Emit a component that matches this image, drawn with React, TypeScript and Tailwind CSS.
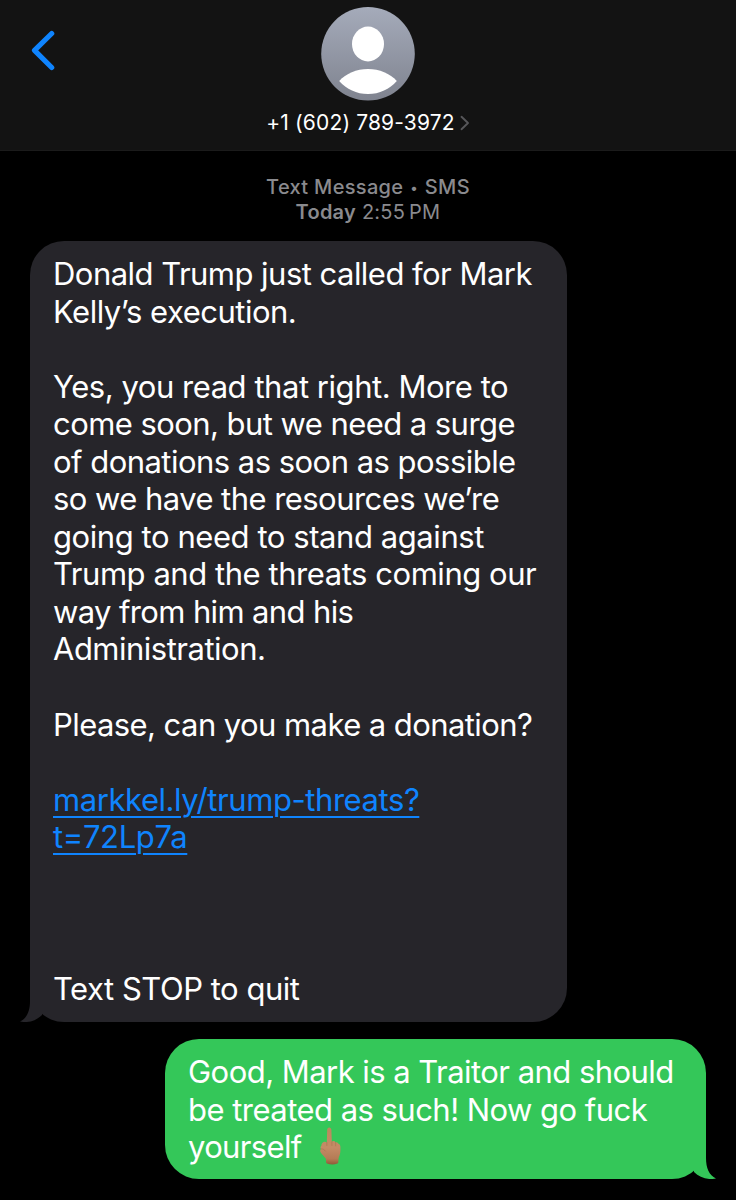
import React from "react";

type Line = { text: string; track: string };

const incoming: Line[] = [
  { text: "Donald Trump just called for Mark", track: "tracking-[-0.53px]" },
  { text: "Kelly’s execution.", track: "tracking-[-0.5px]" },
  { text: "", track: "" },
  { text: "Yes, you read that right. More to", track: "tracking-[-0.46px]" },
  { text: "come soon, but we need a surge", track: "tracking-[-0.56px]" },
  { text: "of donations as soon as possible", track: "tracking-[-0.53px]" },
  { text: "so we have the resources we’re", track: "tracking-[-0.55px]" },
  { text: "going to need to stand against", track: "tracking-[-0.43px]" },
  { text: "Trump and the threats coming our", track: "tracking-[-0.45px]" },
  { text: "way from him and his", track: "tracking-[-0.63px]" },
  { text: "Administration.", track: "tracking-[-0.5px]" },
  { text: "", track: "" },
  { text: "Please, can you make a donation?", track: "tracking-[-0.57px]" },
  { text: "", track: "" },
];

const link: Line[] = [
  { text: "markkel.ly/trump-threats?", track: "tracking-[-0.43px]" },
  { text: "t=72Lp7a", track: "tracking-[-0.36px]" },
];

const outgoing: Line[] = [
  { text: "Good, Mark is a Traitor and should", track: "tracking-[-0.54px]" },
  { text: "be treated as such! Now go fuck", track: "tracking-[-0.53px]" },
];

function TextLine({ text, track }: Line) {
  return <div className={`h-[37.56px] whitespace-pre ${track}`}>{text}</div>;
}

function MiddleFinger() {
  return (
    <svg className="ml-[18px] mt-[-1px] h-[38px] w-[21px] shrink-0" viewBox="0 0 21 38" role="img" aria-label="🖕🏽">
      <defs>
        <linearGradient id="skin" x1="0" y1="0" x2="0" y2="1">
          <stop offset="0" stopColor="#b98a5c" />
          <stop offset="0.55" stopColor="#c48b66" />
          <stop offset="0.85" stopColor="#b57b55" />
          <stop offset="1" stopColor="#8f5a38" />
        </linearGradient>
      </defs>
      <path
        d="M7.200 3C7.200 1.300 8 .4 9.200.4s2.100.9 2.200 2.600l.4 11.700c.9-1 2.900-.9 3.700.5 1.400-.2 2.600.4 3 1.600 1.200.4 1.800 1.500 1.900 3 .1 3 .1 6-.7 8.200-.4 1.400-1 2.300-1.200 3.600l-.2 4c-.1 1.100-2.200 1.800-6 1.800-4 0-6.100-.6-6.200-1.800l-.2-3.900C4.600 29.500 1.900 27.500.6 25.200c-.6-1.200-.5-2.500.4-3.300-.8-1-.6-2.300.3-3 .2-2 .9-3.600 2.500-4 1.200-.3 2.300-.1 3 .5z"
        fill="url(#skin)"
      />
      <path
        d="M6.800 15.600v3M11.900 15v3.500M15.600 15.500v3.300M1.200 21.900c1.600-.1 3.300.6 4.300 2.200"
        fill="none"
        stroke="#945d3b"
        strokeOpacity="0.45"
        strokeWidth="0.7"
        strokeLinecap="round"
      />
    </svg>
  );
}

export default function App() {
  return (
    <div className="flex h-[1200px] w-[736px] flex-col overflow-hidden bg-black font-['Inter',sans-serif] text-white">
      <header className="grid h-[151px] shrink-0 grid-cols-[1fr_auto_1fr] border-b border-[#1b1b1b] bg-[#131313]">
        <button aria-label="Back" className="ml-[31px] mt-[30px] h-[41px] w-[25px] self-start">
          <svg viewBox="0 0 25 41" className="h-[41px] w-[25px]">
            <path d="M20.700 3.500L3.500 20.300L20.700 37.500" fill="none" stroke="#0f84fe" strokeWidth="5.200" strokeLinecap="round" strokeLinejoin="round" />
          </svg>
        </button>
        <div className="flex flex-col items-center pt-[7px]">
          <svg viewBox="0 0 94 94" className="h-[94px] w-[94px]">
            <defs>
              <linearGradient id="avatar" x1="0" y1="0" x2="0" y2="1">
                <stop offset="0" stopColor="#a5abba" />
                <stop offset="1" stopColor="#7f838f" />
              </linearGradient>
            </defs>
            <circle cx="47" cy="46.800" r="46.800" fill="url(#avatar)" />
            <ellipse cx="47" cy="37" rx="16" ry="17.400" fill="#fff" />
            <path d="M18.200 74C25 66.500 35.500 62 47 62s22 4.500 28.800 12C68.500 82.300 58.500 87 47 87s-21.500-4.700-28.800-13z" fill="#fff" />
          </svg>
          <div className="mt-[8px] flex items-center text-[21px] leading-[27px]">
            <span className="font-[370] tracking-[0.15px]">+1 (602) 789-3972</span>
            <svg viewBox="0 0 10 16" className="ml-[5px] mt-[1px] h-[16px] w-[10px]">
              <path d="M1.500 1.800L8 8L1.500 14.200" fill="none" stroke="#57575a" strokeWidth="1.900" strokeLinecap="round" strokeLinejoin="round" />
            </svg>
          </div>
        </div>
      </header>

      <main className="flex flex-col">
        <div className="mt-[24px] flex h-[66px] flex-col items-center text-[20px] leading-[24.500px] text-[#8a8a8e]">
          <div className="h-[24.500px] whitespace-pre font-medium tracking-[0.32px]">Text Message <span className="relative top-[-1.500px] mx-[1.200px] text-[14px]">•</span> SMS</div>
          <div className="h-[24.500px] tracking-[0.25px]"><span className="font-semibold">Today</span> 2:55{"\u202F"}PM</div>
        </div>

        <section className="relative ml-[30px] h-[781px] w-[537px] rounded-[34px] bg-[#26252a] pl-[23px] pt-[14px] font-[370] text-[31px] leading-[37.560px]">
          {incoming.map((l, i) => <TextLine key={i} {...l} />)}
          <a className="block text-[#0f84fe] underline decoration-[2px] underline-offset-[5px]">
            {link.map((l, i) => <TextLine key={i} {...l} />)}
          </a>
          <div className="h-[114.500px]" />
          <TextLine text="Text STOP to quit" track="tracking-[-0.48px]" />
          <svg viewBox="0 0 22 40" className="absolute bottom-0 left-[-10px] h-[40px] w-[22px]">
            <path d="M10 0V19C10 29 7 36 0 39.600C9 41.200 16.500 38.500 22 33V0z" fill="#26252a" />
          </svg>
        </section>

        <section className="relative ml-[165px] mt-[17px] h-[140px] w-[540.500px] rounded-[34px] bg-[#34c759] pl-[23px] pt-[14px] font-[370] text-[31px] leading-[37.560px]">
          {outgoing.map((l, i) => <TextLine key={i} {...l} />)}
          <div className="flex h-[37.560px]">
            <span className="tracking-[-0.66px]">yourself</span>
            <MiddleFinger />
          </div>
          <svg viewBox="0 0 22 40" className="absolute bottom-0 right-[-10px] h-[40px] w-[22px]">
            <path d="M12 0V19C12 29 15 36 22 39.600C13 41.200 5.500 38.500 0 33V0z" fill="#34c759" />
          </svg>
        </section>
      </main>
    </div>
  );
}
